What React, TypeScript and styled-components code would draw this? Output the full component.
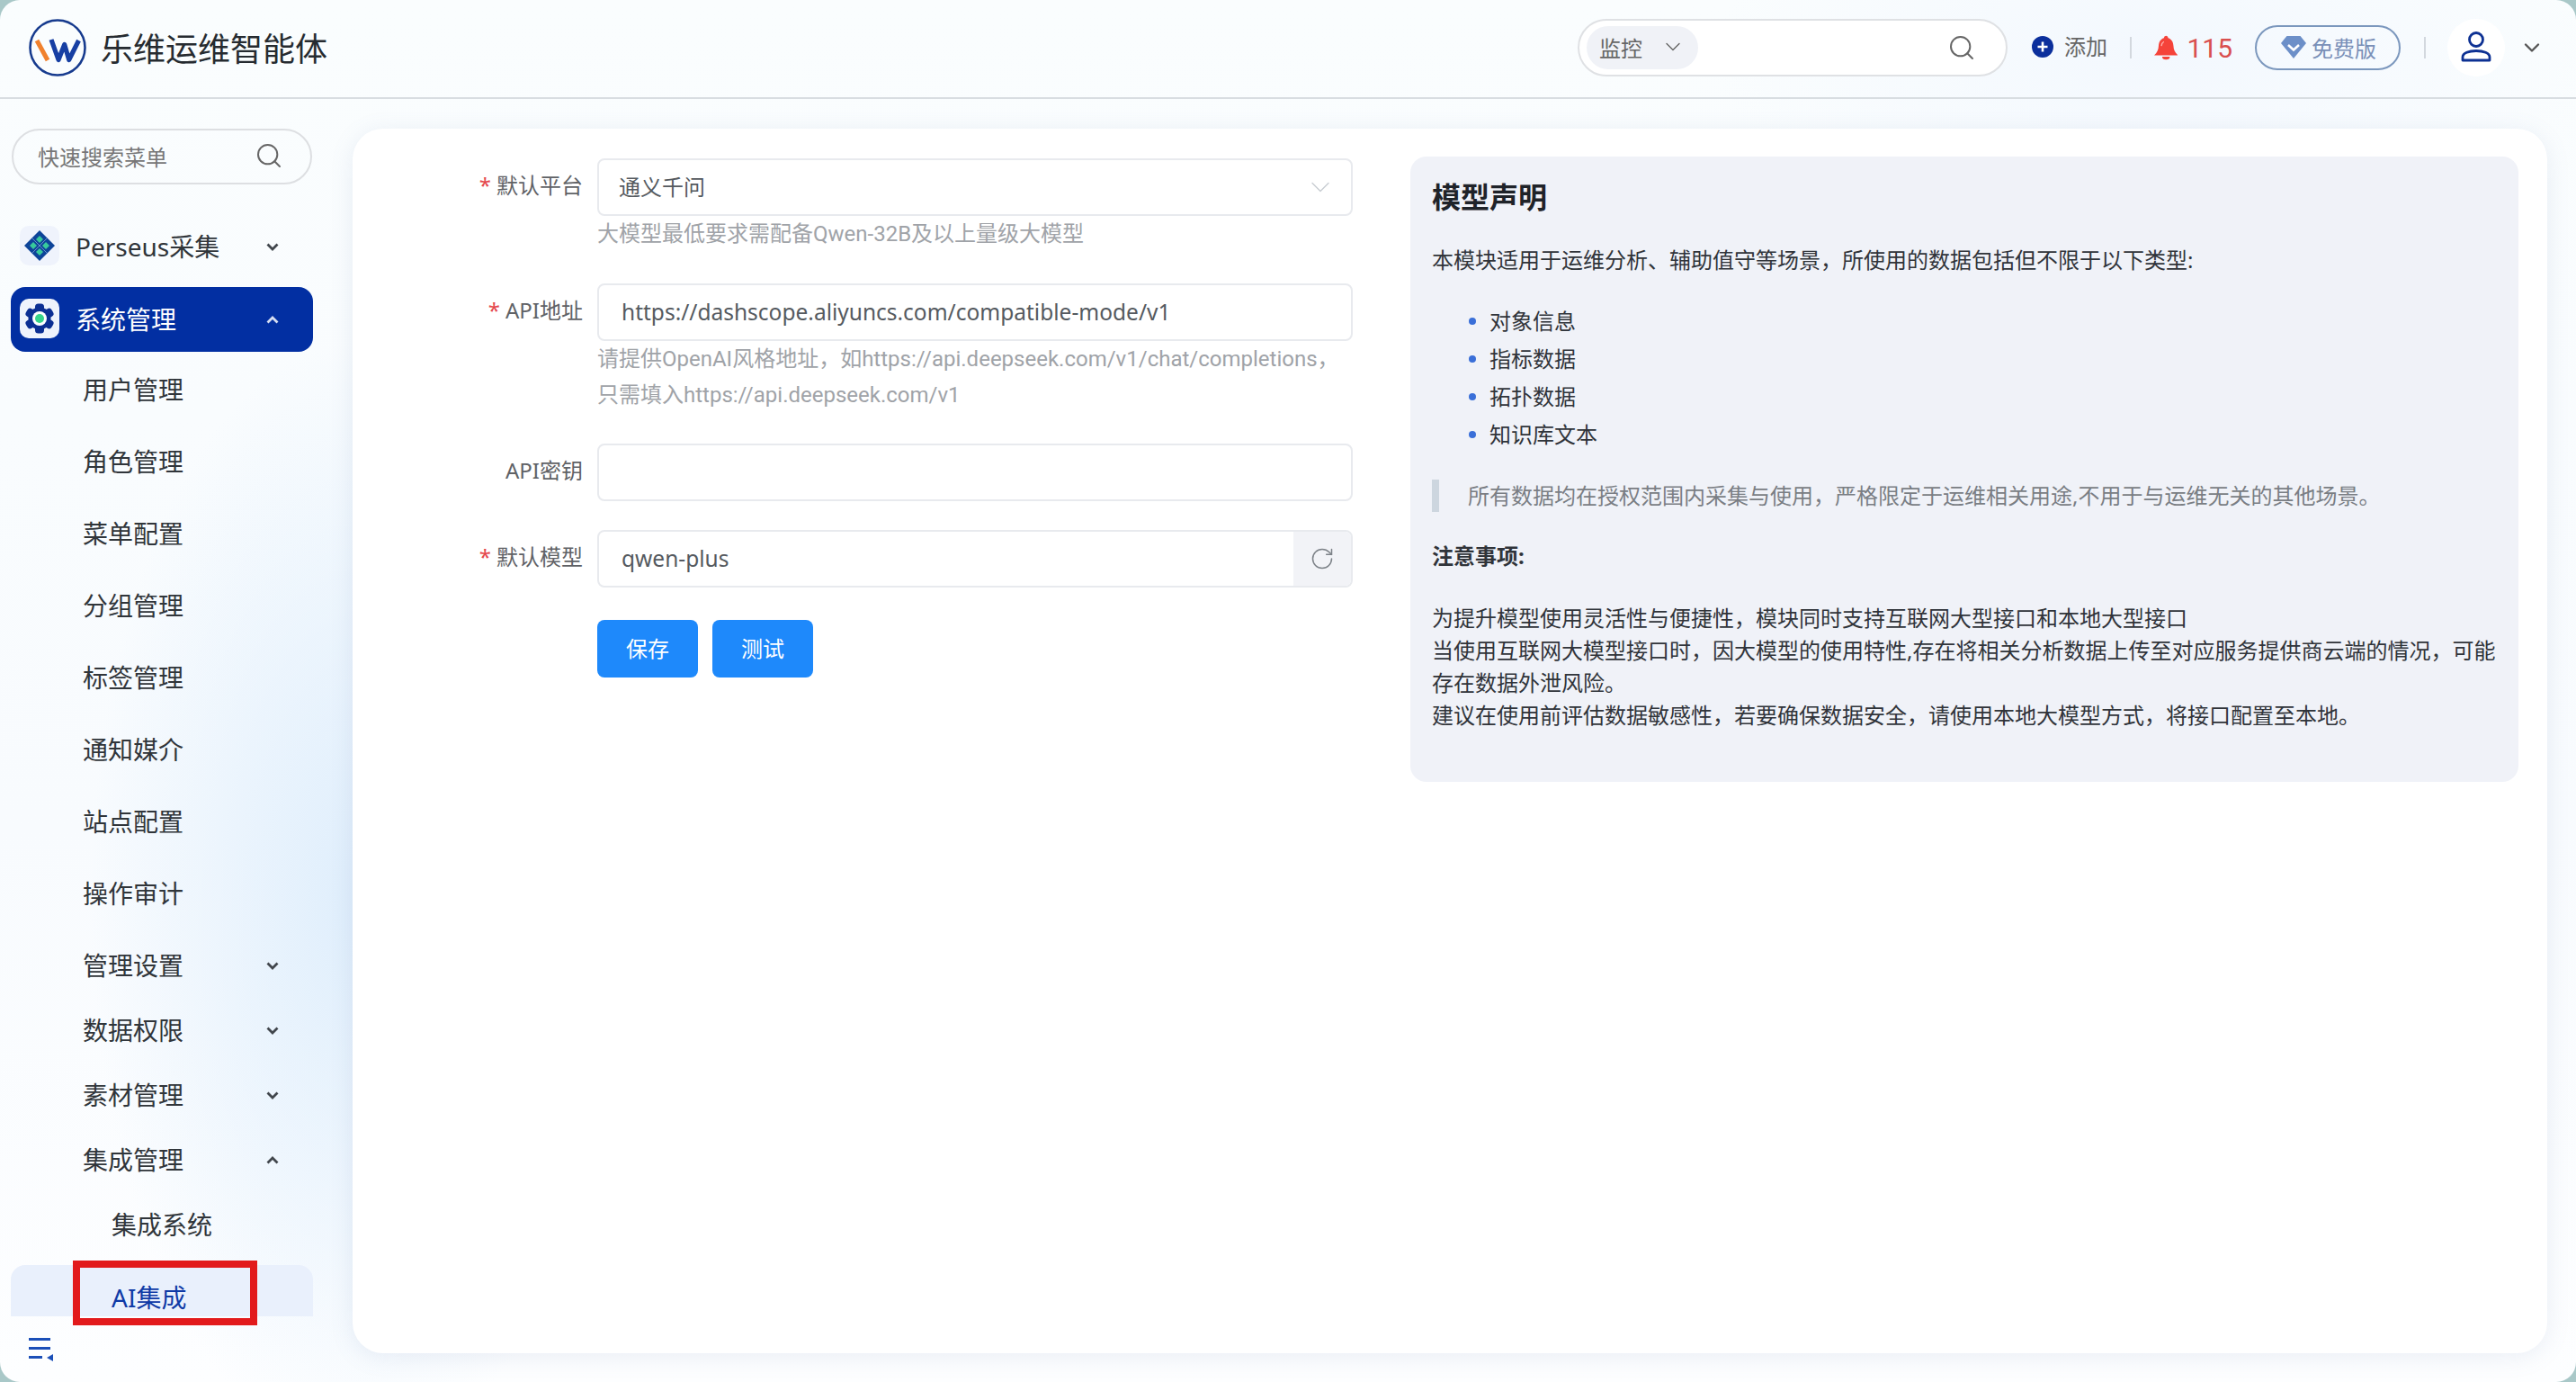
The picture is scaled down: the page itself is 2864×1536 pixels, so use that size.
import React from "react";
import styled, { createGlobalStyle } from "styled-components";
import { ChevronDown, RotateCw, Search } from "lucide-react";

const Global = createGlobalStyle`
  html, body { margin: 0; padding: 0; background: #a9c8c8; }
  * { box-sizing: border-box; }
  body { font-family: "Noto Sans", "Noto Sans CJK SC", sans-serif; }
`;

const Page = styled.div`
  width: 2864px;
  height: 1536px;
  overflow: hidden;
  border-radius: 22px;
  position: relative;
  display: flex;
  flex-direction: column;
  background:
    radial-gradient(ellipse 300px 620px at 400px 1000px, #dfeefc 0%, rgba(223, 238, 252, 0) 100%),
    radial-gradient(ellipse 500px 200px at 2400px 60px, #f3f8fe 0%, rgba(243, 248, 254, 0) 100%),
    linear-gradient(180deg, #fafdfe 0%, #f8fbfe 60%, #fdfeff 100%);
`;

const Header = styled.header`
  height: 110px;
  flex: none;
  display: flex;
  align-items: center;
  padding: 0 35px 2px 32px;
  border-bottom: 2px solid #d8dde1;
`;
const Title = styled.div`
  margin: 3px 0 0 16px;
  font-size: 36px;
  line-height: 50px;
  color: #262b30;
`;
const SearchBox = styled.div`
  margin-left: auto;
  width: 478px;
  height: 64px;
  border: 2px solid #dfe1e4;
  border-radius: 32px;
  background: #fff;
  display: flex;
  align-items: center;
  padding: 0 33px 0 8px;
  justify-content: space-between;
  color: #666;
`;
const ScopePill = styled.div`
  width: 124px;
  height: 48px;
  border-radius: 24px;
  background: #f0f2f7;
  display: flex;
  align-items: center;
  padding: 0 0 2px 14px;
  gap: 20px;
  font-size: 24px;
  color: #666;
`;
const AddLink = styled.div`
  margin-left: 27px;
  display: flex;
  align-items: center;
  gap: 12px;
  font-size: 24px;
  line-height: 30px;
  padding-bottom: 2px;
  color: #666;
`;
const VLine = styled.div<{ $l: number }>`
  width: 2px;
  height: 24px;
  background: #d3d8de;
  margin-left: ${(p) => p.$l}px;
`;
const Alerts = styled.div`
  margin-left: 25px;
  display: flex;
  align-items: center;
  gap: 10px;
  font-family: Roboto, sans-serif;
  font-size: 30px;
  color: #d94f4f;
  width: 87px;
`;
const PlanPill = styled.div`
  margin-left: 25px;
  width: 162px;
  height: 50px;
  border: 2.5px solid #7b97bd;
  border-radius: 25px;
  display: flex;
  align-items: center;
  padding: 0 0 2px 27px;
  gap: 6px;
  font-size: 24px;
  color: #7a90b8;
`;
const Avatar = styled.div`
  margin-left: 24px;
  width: 64px;
  height: 64px;
  border-radius: 50%;
  background: #fff;
  display: flex;
  align-items: center;
  justify-content: center;
`;
const HeaderCaret = styled.div`
  margin-left: 16px;
  display: flex;
  color: #555;
`;

const Body = styled.div`
  flex: 1;
  display: flex;
  min-height: 0;
`;
const Sidebar = styled.aside`
  width: 392px;
  flex: none;
  display: flex;
  flex-direction: column;
  position: relative;
`;
const MenuSearch = styled.div`
  margin: 33px 0 0 13px;
  width: 334px;
  height: 62px;
  flex: none;
  border: 2px solid #dddfe2;
  border-radius: 31px;
  display: flex;
  align-items: center;
  justify-content: space-between;
  padding: 0 30px 2px 27px;
  font-size: 24px;
  color: #777;
`;
const Menu = styled.nav`
  margin-top: 33px;
  flex: 1;
  min-height: 0;
  overflow: hidden;
`;
const Row = styled.div<{ $top?: number; $active?: boolean; $selected?: boolean; $indent?: number }>`
  margin: ${(p) => p.$top ?? 0}px 44px 0 12px;
  height: 72px;
  display: flex;
  align-items: center;
  padding-left: ${(p) => p.$indent ?? 10}px;
  padding-right: 38px;
  padding-bottom: 2px;
  border-radius: 16px;
  font-size: 28px;
  color: ${(p) => (p.$active ? "#fff" : p.$selected ? "#0f3aa6" : "#30353a")};
  background: ${(p) => (p.$active ? "#022fa2" : p.$selected ? "#e9f0fc" : "transparent")};
`;
const MenuIcon = styled.div`
  width: 44px;
  height: 44px;
  border-radius: 10px;
  background: #eff3fc;
  display: flex;
  align-items: center;
  justify-content: center;
  margin-right: 18px;
`;
const Spacer = styled.span`
  flex: 1;
`;
const Foot = styled.div`
  height: 73px;
  flex: none;
  padding: 24px 0 0 32px;
`;
const Marker = styled.div`
  position: absolute;
  left: 81px;
  top: 1291px;
  width: 205px;
  height: 72px;
  border: 8px solid #e21a1c;
`;
const CaretMark = styled.svg`
  margin-top: 2px;
`;

const Main = styled.main`
  flex: 1;
  padding: 33px 32px 32px 0;
`;
const Card = styled.section`
  height: 100%;
  border-radius: 34px;
  background: #fff;
  box-shadow: 0 4px 26px rgba(110, 130, 175, 0.13);
  display: flex;
  padding: 31px 32px 0 0;
  align-items: flex-start;
`;
const Form = styled.div`
  width: 1112px;
  flex: none;
  padding-top: 2px;
  margin-right: 64px;
  font-size: 24px;
`;
const FormRow = styled.div<{ $top?: number }>`
  display: grid;
  grid-template-columns: 256px 840px;
  column-gap: 16px;
  margin-top: ${(p) => p.$top ?? 0}px;
`;
const Label = styled.label`
  display: block;
  text-align: right;
  line-height: 60px;
  color: #606266;
`;
const Star = styled.span`
  color: #e5484d;
  margin-right: 6px;
`;
const Field = styled.div`
  height: 64px;
  border: 2px solid #e8eaee;
  border-radius: 8px;
  background: #fff;
  display: flex;
  align-items: center;
  color: #555a60;
  overflow: hidden;
  line-height: 60px;
`;
const SelectText = styled.span`
  flex: 1;
  padding-left: 22px;
`;
const SelectCaret = styled.span`
  display: flex;
  margin-right: 16px;
  color: #c8ccd2;
`;
const InputText = styled.span`
  flex: 1;
  padding-left: 25px;
  font-size: 24.5px;
`;
const Addon = styled.span`
  width: 64px;
  height: 100%;
  background: #f2f3f7;
  display: flex;
  align-items: center;
  justify-content: center;
  color: #7d8288;
`;
const Hint = styled.div`
  grid-column: 2;
  font-family: Roboto, "Noto Sans CJK SC", sans-serif;
  line-height: 40px;
  color: #a0a3a8;
  white-space: nowrap;
`;
const Buttons = styled.div`
  margin: 36px 0 0 272px;
  display: flex;
  gap: 16px;
`;
const Btn = styled.button`
  width: 112px;
  height: 64px;
  border: none;
  border-radius: 8px;
  background: #1e89fb;
  color: #fff;
  font: inherit;
  font-size: 24px;
  padding: 0 0 3px;
`;

const Notice = styled.article`
  width: 1232px;
  height: 695px;
  flex: none;
  border-radius: 18px;
  background: #f0f2f8;
  padding: 23px 24px 0;
  font-size: 24px;
  color: #30343a;
`;
const NoticeTitle = styled.h2`
  margin: 0;
  font-size: 32px;
  line-height: 44px;
  font-weight: 700;
  color: #1f2329;
`;
const Para = styled.p<{ $top: number; $bold?: boolean }>`
  margin: ${(p) => p.$top}px 0 0;
  line-height: 36px;
  font-weight: ${(p) => (p.$bold ? 700 : 400)};
`;
const List = styled.ul`
  margin: 29px 0 0;
  padding: 0 0 0 64px;
  list-style: none;
`;
const Item = styled.li`
  position: relative;
  line-height: 42px;
  &::before {
    content: "";
    position: absolute;
    left: -23px;
    top: 17px;
    width: 8px;
    height: 8px;
    border-radius: 50%;
    background: #3a6fd8;
  }
`;
const Quote = styled.blockquote`
  margin: 29px 0 0;
  border-left: 8px solid #cdd6df;
  padding-left: 32px;
  line-height: 36px;
  color: #7a7e84;
`;

const Logo = () => (
  <svg width="64" height="64" viewBox="0 0 64 64" fill="none">
    <circle cx="32" cy="32" r="30.5" stroke="#173b8e" strokeWidth="2.6" />
    <path d="M9 24 L21 46" stroke="#f0812e" strokeWidth="5" />
    <path d="M25 23 L33 45.500 L39.700 28.500 L44.700 45.500 L55.500 24" stroke="#173fa3" strokeWidth="5.200" strokeLinejoin="round" />
  </svg>
);
const PlusDot = () => (
  <svg width="24" height="24" viewBox="0 0 24 24">
    <circle cx="12" cy="12" r="12" fill="#0b2f9c" />
    <path d="M12 6.5v11M6.5 12h11" stroke="#fff" strokeWidth="2.6" />
  </svg>
);
const Bell = () => (
  <svg width="30" height="30" viewBox="0 0 28 28">
    <path d="M14 0a2.6 2.6 0 0 1 2.5 2.6C21 4 22.6 8 22.8 12.500c.2 4.200 1.700 7.300 5.200 10.500H0c3.500-3.200 5-6.300 5.200-10.500C5.400 8 7 4 11.500 2.600A2.600 2.600 0 0 1 14 0Z" fill="#f5433a" />
    <path d="M9.500 24.500h9a4.500 3.500 0 0 1-9 0Z" fill="#f5433a" />
    <path d="M8.500 12c.2-2.500 1.200-4.200 3-5.200" stroke="#ffb3ad" strokeWidth="1.400" fill="none" />
  </svg>
);
const Gem = () => (
  <svg width="28" height="25" viewBox="0 0 28 25">
    <path d="M6.500 0h15L28 8 14 25 0 8Z" fill="#6c8fc8" />
    <path d="M8 10l6 5.500L20 10" stroke="#fff" strokeWidth="2.600" fill="none" />
  </svg>
);
const User = () => (
  <svg width="36" height="36" viewBox="0 0 36 36" fill="none" stroke="#0d3193" strokeWidth="2.800">
    <circle cx="18" cy="9" r="7.500" />
    <path d="M3 32v-3.500C3 24 10 21.500 18 21.500S33 24 33 28.500V32Z" strokeLinejoin="round" />
  </svg>
);
const Perseus = () => (
  <svg width="36" height="36" viewBox="0 0 36 36">
    <path d="M18 1 35 18 18 35 1 18Z" fill="#0d4499" />
    <path d="M9.500 9.500 26.500 26.500M26.500 9.500 9.500 26.500" stroke="#7fa6d8" strokeWidth="0.800" />
    <path d="M18 7 22 11 18 15 14 11Z M25 14 29 18 25 22 21 18Z M18 21 22 25 18 29 14 25Z M11 14 15 18 11 22 7 18Z" fill="#38c99c" />
  </svg>
);
const Gear = () => (
  <svg width="34" height="34" viewBox="0 0 34 34">
    <g fill="#0c2f93">
      <circle cx="17" cy="17" r="12.500" />
      {[0, 60, 120, 180, 240, 300].map((a) => (
        <rect key={a} x="12" y="0.500" width="10" height="9" rx="3.500" transform={`rotate(${a} 17 17)`} />
      ))}
    </g>
    <circle cx="17" cy="17" r="8" fill="#fff" />
    <circle cx="17" cy="17" r="5" fill="#38d58b" />
  </svg>
);
const Fold = () => (
  <svg width="28" height="27" viewBox="0 0 28 27" fill="#1b4fb8">
    <rect x="0" y="0" width="24" height="3" />
    <rect x="0" y="10" width="24" height="3" />
    <rect x="0" y="20" width="15" height="3" />
    <path d="M27 18v8l-7-4Z" />
  </svg>
);
const Caret = ({ up, color = "#41464c" }: { up?: boolean; color?: string }) => (
  <CaretMark width="14" height="9" viewBox="0 0 14 9" fill="none">
    <path d={up ? "M1.500 7.500 7 2l5.500 5.500" : "M1.500 1.500 7 7l5.500-5.500"} stroke={color} strokeWidth="2.800" />
  </CaretMark>
);

const leaves = ["用户管理", "角色管理", "菜单配置", "分组管理", "标签管理", "通知媒介", "站点配置", "操作审计"];

export default function App() {
  return (
    <Page>
      <Global />
      <Header>
        <Logo />
        <Title>乐维运维智能体</Title>
        <SearchBox>
          <ScopePill>
            监控
            <ChevronDown size={28} strokeWidth={1.2} />
          </ScopePill>
          <Search size={32} strokeWidth={1.5} />
        </SearchBox>
        <AddLink>
          <PlusDot />
          添加
        </AddLink>
        <VLine $l={25} />
        <Alerts>
          <Bell />
          115
        </Alerts>
        <PlanPill>
          <Gem />
          免费版
        </PlanPill>
        <VLine $l={26} />
        <Avatar>
          <User />
        </Avatar>
        <HeaderCaret>
          <ChevronDown size={28} strokeWidth={2} />
        </HeaderCaret>
      </Header>
      <Body>
        <Sidebar>
          <MenuSearch>
            快速搜索菜单
            <Search size={32} strokeWidth={1.5} color="#666" />
          </MenuSearch>
          <Menu>
            <Row>
              <MenuIcon>
                <Perseus />
              </MenuIcon>
              Perseus采集
              <Spacer />
              <Caret />
            </Row>
            <Row $top={9} $active>
              <MenuIcon>
                <Gear />
              </MenuIcon>
              系统管理
              <Spacer />
              <Caret up color="#d7dff2" />
            </Row>
            {leaves.map((t, i) => (
              <Row key={t} $top={i === 0 ? 6 : 8} $indent={80}>
                {t}
              </Row>
            ))}
            <Row $top={8} $indent={80}>
              管理设置
              <Spacer />
              <Caret />
            </Row>
            <Row $indent={80}>
              数据权限
              <Spacer />
              <Caret />
            </Row>
            <Row $indent={80}>
              素材管理
              <Spacer />
              <Caret />
            </Row>
            <Row $indent={80}>
              集成管理
              <Spacer />
              <Caret up />
            </Row>
            <Row $indent={112}>集成系统</Row>
            <Row $top={9} $indent={112} $selected>
              AI集成
            </Row>
          </Menu>
          <Foot>
            <Fold />
          </Foot>
          <Marker />
        </Sidebar>
        <Main>
          <Card>
            <Form>
              <FormRow>
                <Label>
                  <Star>*</Star>默认平台
                </Label>
                <Field>
                  <SelectText>通义千问</SelectText>
                  <SelectCaret>
                    <ChevronDown size={36} strokeWidth={0.9} />
                  </SelectCaret>
                </Field>
                <Hint>大模型最低要求需配备Qwen-32B及以上量级大模型</Hint>
              </FormRow>
              <FormRow $top={35}>
                <Label>
                  <Star>*</Star>API地址
                </Label>
                <Field>
                  <InputText>https://dashscope.aliyuncs.com/compatible-mode/v1</InputText>
                </Field>
                <Hint>
                  请提供OpenAI风格地址，如https://api.deepseek.com/v1/chat/completions，
                  <br />
                  只需填入https://api.deepseek.com/v1
                </Hint>
              </FormRow>
              <FormRow $top={34}>
                <Label>API密钥</Label>
                <Field />
              </FormRow>
              <FormRow $top={32}>
                <Label>
                  <Star>*</Star>默认模型
                </Label>
                <Field>
                  <InputText>qwen-plus</InputText>
                  <Addon>
                    <RotateCw size={28} strokeWidth={1.3} />
                  </Addon>
                </Field>
              </FormRow>
              <Buttons>
                <Btn>保存</Btn>
                <Btn>测试</Btn>
              </Buttons>
            </Form>
            <Notice>
              <NoticeTitle>模型声明</NoticeTitle>
              <Para $top={30}>本模块适用于运维分析、辅助值守等场景，所使用的数据包括但不限于以下类型:</Para>
              <List>
                <Item>对象信息</Item>
                <Item>指标数据</Item>
                <Item>拓扑数据</Item>
                <Item>知识库文本</Item>
              </List>
              <Quote>所有数据均在授权范围内采集与使用，严格限定于运维相关用途,不用于与运维无关的其他场景。</Quote>
              <Para $top={31} $bold>
                注意事项:
              </Para>
              <Para $top={33}>
                为提升模型使用灵活性与便捷性，模块同时支持互联网大型接口和本地大型接口
                <br />
                当使用互联网大模型接口时，因大模型的使用特性,存在将相关分析数据上传至对应服务提供商云端的情况，可能存在数据外泄风险。
                <br />
                建议在使用前评估数据敏感性，若要确保数据安全，请使用本地大模型方式，将接口配置至本地。
              </Para>
            </Notice>
          </Card>
        </Main>
      </Body>
    </Page>
  );
}
